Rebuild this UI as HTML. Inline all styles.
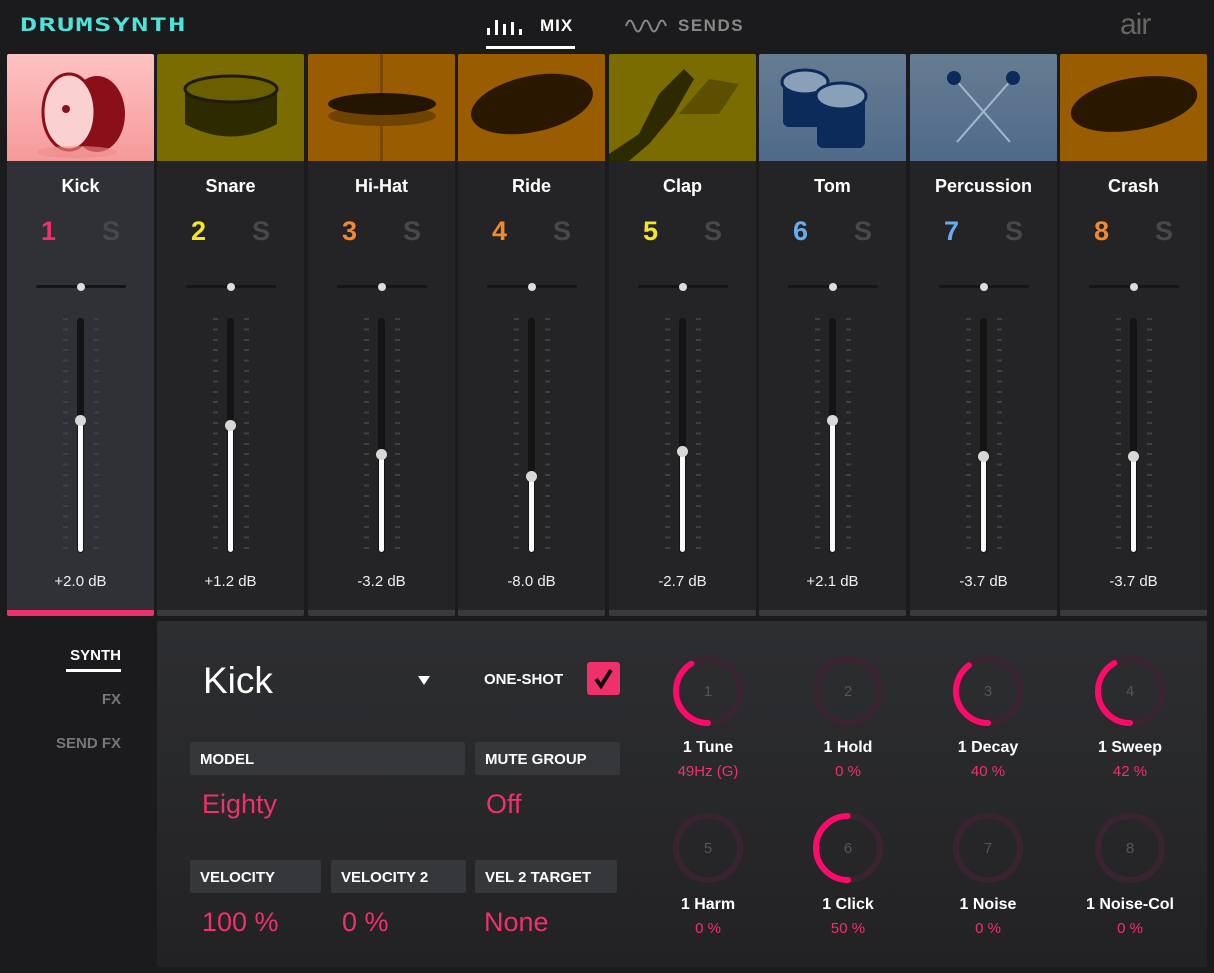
<!DOCTYPE html>
<html><head><meta charset="utf-8"><style>
*{margin:0;padding:0;box-sizing:border-box}
body{width:1214px;height:973px;background:#1b1b1d;font-family:"Liberation Sans",sans-serif;position:relative;overflow:hidden;color:#fff}
.a{position:absolute}
.col{position:absolute;top:54px;width:147px;height:562px}
.img{position:absolute;left:0;top:0;width:147px;height:107px;overflow:hidden;border-radius:2px 2px 0 0}
.strip{position:absolute;left:0;top:107px;width:147px;height:449px;background:#242426}
.bar{position:absolute;left:0;top:556px;width:147px;height:6px;background:#3a3a3e;border-radius:0 0 2px 2px}
.nm{position:absolute;top:122px;width:147px;text-align:center;font-weight:bold;font-size:18px}
.num{position:absolute;top:162px;left:34px;font-size:27px;font-weight:bold}
.s{position:absolute;top:162px;left:95px;font-size:27px;font-weight:bold;color:#48484c}
.pan{position:absolute;top:231px;left:29px;width:90px;height:3px;background:#151516;border-radius:2px}
.pan i{position:absolute;left:41px;top:-2.5px;width:8px;height:8px;border-radius:50%;background:#ddd}
.tk{position:absolute;top:264px;width:5px;height:234px;background:repeating-linear-gradient(to bottom,#404044 0 2px,transparent 2px 10.4px)}
.trk{position:absolute;top:264px;left:70px;width:7px;height:235px;background:#141415;border-radius:4px}
.fill{position:absolute;left:71px;width:5px;background:#fafafa;border-radius:3px;bottom:64px}
.th{position:absolute;left:68px;width:11px;height:11px;border-radius:50%;background:#d8d8d8}
.db{position:absolute;top:519px;width:147px;text-align:center;font-size:15px;color:#eee}
.hdr{position:absolute;background:#36373b;height:33px;font-weight:bold;font-size:15px;padding:9px 0 0 10px;border-radius:2px}
.val{position:absolute;color:#f0306a;font-size:27px}
.kn{position:absolute;width:140px;text-align:center}
.kn svg{display:block;margin:0 auto}
.kl{font-weight:bold;font-size:16px;margin-top:12px}
.kv{color:#f0306a;font-size:15px;margin-top:6px}
</style></head><body>
<!-- header -->
<div class="a" style="left:20px;top:13px;font-size:22px;font-weight:bold;color:#4de3da;letter-spacing:1px;font-family:'DejaVu Sans Mono','Liberation Mono',monospace;transform:scale(1.3,0.85);transform-origin:left center">DRUMSYNTH</div>
<svg class="a" style="left:486px;top:16px" width="38" height="20"><g fill="#fff"><rect x="1" y="12" width="3" height="7"/><rect x="9" y="4" width="3" height="15"/><rect x="17" y="8" width="3" height="11"/><rect x="25" y="6" width="3" height="13"/><rect x="33" y="13" width="3" height="6"/></g></svg>
<div class="a" style="left:540px;top:16px;font-weight:bold;font-size:17px;letter-spacing:1px">MIX</div>
<div class="a" style="left:486px;top:46px;width:89px;height:3px;background:#fff"></div>
<svg class="a" style="left:625px;top:17px" width="44" height="18"><path d="M1 9 Q5 -2 9 9 T17 9 T25 9 T33 9 T41 9" stroke="#888" stroke-width="2" fill="none"/></svg>
<div class="a" style="left:678px;top:16px;font-weight:bold;font-size:17px;letter-spacing:1.5px;color:#888">SENDS</div>
<div class="a" style="left:1120px;top:8px;font-size:30px;color:#666;letter-spacing:-1px">air</div>

<!-- channels -->
<div class="col" style="left:7px">
 <div class="img" style="background:linear-gradient(#ffc2c2,#f59a9a)"><svg width="147" height="107"><ellipse cx="90" cy="60" rx="28" ry="38" fill="#8a0f18"/><ellipse cx="62" cy="58" rx="26" ry="38" fill="#fbd0d0" stroke="#8a0f18" stroke-width="3"/><circle cx="59" cy="55" r="4" fill="#8a0f18"/><ellipse cx="70" cy="98" rx="40" ry="6" fill="#f08a8a" opacity=".6"/></svg></div>
 <div class="strip" style="background:#303136"></div><div class="bar" style="background:#f0306a"></div>
 <div class="nm">Kick</div><div class="num" style="color:#f0306a">1</div><div class="s">S</div>
 <div class="pan"><i></i></div><div class="tk" style="left:56px"></div><div class="tk" style="left:87px"></div><div class="trk"></div>
 <div class="fill" style="top:366px"></div><div class="th" style="top:361px"></div><div class="db">+2.0 dB</div>
</div>
<div class="col" style="left:157px">
 <div class="img" style="background:#7a6c00"><svg width="147" height="107"><path d="M28 35 L28 70 Q74 95 120 70 L120 35 Z" fill="#2e2a00"/><ellipse cx="74" cy="35" rx="46" ry="13" fill="#6a5e00" stroke="#1e1c00" stroke-width="3"/></svg></div>
 <div class="strip"></div><div class="bar"></div>
 <div class="nm">Snare</div><div class="num" style="color:#f5e52a">2</div><div class="s">S</div>
 <div class="pan"><i></i></div><div class="tk" style="left:56px"></div><div class="tk" style="left:87px"></div><div class="trk"></div>
 <div class="fill" style="top:371px"></div><div class="th" style="top:366px"></div><div class="db">+1.2 dB</div>
</div>
<div class="col" style="left:308px">
 <div class="img" style="background:#9a5c00"><svg width="147" height="107"><rect x="72" y="0" width="3" height="107" fill="#7a4800"/><ellipse cx="74" cy="62" rx="54" ry="10" fill="#6e4200"/><ellipse cx="74" cy="50" rx="54" ry="11" fill="#231500"/></svg></div>
 <div class="strip"></div><div class="bar"></div>
 <div class="nm">Hi-Hat</div><div class="num" style="color:#f5882a">3</div><div class="s">S</div>
 <div class="pan"><i></i></div><div class="tk" style="left:56px"></div><div class="tk" style="left:87px"></div><div class="trk"></div>
 <div class="fill" style="top:400px"></div><div class="th" style="top:395px"></div><div class="db">-3.2 dB</div>
</div>
<div class="col" style="left:458px">
 <div class="img" style="background:#9a5c00"><svg width="147" height="107"><ellipse cx="74" cy="50" rx="62" ry="28" fill="#2a1700" transform="rotate(-12 74 50)"/></svg></div>
 <div class="strip"></div><div class="bar"></div>
 <div class="nm">Ride</div><div class="num" style="color:#f5882a">4</div><div class="s">S</div>
 <div class="pan"><i></i></div><div class="tk" style="left:56px"></div><div class="tk" style="left:87px"></div><div class="trk"></div>
 <div class="fill" style="top:422px"></div><div class="th" style="top:417px"></div><div class="db">-8.0 dB</div>
</div>
<div class="col" style="left:609px">
 <div class="img" style="background:#7a6c00"><svg width="147" height="107"><path d="M0 100 L30 80 L50 40 L75 15 L85 25 L65 60 L40 90 L20 107 L0 107Z" fill="#2e2a00"/><path d="M70 60 L100 25 L130 30 L110 60 Z" fill="#5a5000"/></svg></div>
 <div class="strip"></div><div class="bar"></div>
 <div class="nm">Clap</div><div class="num" style="color:#f5e52a">5</div><div class="s">S</div>
 <div class="pan"><i></i></div><div class="tk" style="left:56px"></div><div class="tk" style="left:87px"></div><div class="trk"></div>
 <div class="fill" style="top:397px"></div><div class="th" style="top:392px"></div><div class="db">-2.7 dB</div>
</div>
<div class="col" style="left:759px">
 <div class="img" style="background:linear-gradient(#667c92,#4f6a8a)"><svg width="147" height="107"><rect x="24" y="28" width="44" height="45" rx="6" fill="#0c2a5a"/><ellipse cx="46" cy="28" rx="23" ry="12" fill="#8aa0b8" stroke="#0c2a5a" stroke-width="3"/><rect x="58" y="42" width="48" height="52" rx="6" fill="#0c2a5a"/><ellipse cx="82" cy="42" rx="25" ry="13" fill="#8aa0b8" stroke="#0c2a5a" stroke-width="3"/></svg></div>
 <div class="strip"></div><div class="bar"></div>
 <div class="nm">Tom</div><div class="num" style="color:#6aaaf0">6</div><div class="s">S</div>
 <div class="pan"><i></i></div><div class="tk" style="left:56px"></div><div class="tk" style="left:87px"></div><div class="trk"></div>
 <div class="fill" style="top:366px"></div><div class="th" style="top:361px"></div><div class="db">+2.1 dB</div>
</div>
<div class="col" style="left:910px">
 <div class="img" style="background:linear-gradient(#667c92,#4f6a8a)"><svg width="147" height="107"><line x1="45" y1="25" x2="100" y2="88" stroke="#a0b8d0" stroke-width="2"/><line x1="102" y1="25" x2="47" y2="88" stroke="#a0b8d0" stroke-width="2"/><circle cx="44" cy="24" r="7" fill="#0c2a5a"/><circle cx="103" cy="24" r="7" fill="#0c2a5a"/></svg></div>
 <div class="strip"></div><div class="bar"></div>
 <div class="nm">Percussion</div><div class="num" style="color:#6aaaf0">7</div><div class="s">S</div>
 <div class="pan"><i></i></div><div class="tk" style="left:56px"></div><div class="tk" style="left:87px"></div><div class="trk"></div>
 <div class="fill" style="top:402px"></div><div class="th" style="top:397px"></div><div class="db">-3.7 dB</div>
</div>
<div class="col" style="left:1060px">
 <div class="img" style="background:#9a5c00"><svg width="147" height="107"><ellipse cx="74" cy="50" rx="64" ry="26" fill="#2a1700" transform="rotate(-10 74 50)"/></svg></div>
 <div class="strip"></div><div class="bar"></div>
 <div class="nm">Crash</div><div class="num" style="color:#f5882a">8</div><div class="s">S</div>
 <div class="pan"><i></i></div><div class="tk" style="left:56px"></div><div class="tk" style="left:87px"></div><div class="trk"></div>
 <div class="fill" style="top:402px"></div><div class="th" style="top:397px"></div><div class="db">-3.7 dB</div>
</div>

<!-- sidebar -->
<div class="a" style="left:40px;top:647px;width:81px;text-align:right;font-weight:bold;font-size:15px">SYNTH</div>
<div class="a" style="left:66px;top:669px;width:55px;height:3px;background:#fff"></div>
<div class="a" style="left:40px;top:691px;width:81px;text-align:right;font-weight:bold;font-size:15px;color:#777">FX</div>
<div class="a" style="left:20px;top:735px;width:101px;text-align:right;font-weight:bold;font-size:15px;color:#777">SEND FX</div>

<!-- bottom panel -->
<div class="a" style="left:157px;top:621px;width:1050px;height:346px;background:linear-gradient(#2d2e31,#222224);border-radius:2px"></div>
<div class="a" style="left:203px;top:660px;font-size:37px">Kick</div>
<div class="a" style="left:418px;top:676px;width:0;height:0;border-left:6px solid transparent;border-right:6px solid transparent;border-top:9px solid #fff"></div>
<div class="a" style="left:484px;top:671px;font-weight:bold;font-size:15px">ONE-SHOT</div>
<div class="a" style="left:587px;top:662px;width:33px;height:33px;background:#f0306a;border-radius:3px"><svg width="33" height="33"><path d="M9 17 L14 24 L24 8" stroke="#111" stroke-width="4" fill="none"/></svg></div>
<div class="hdr" style="left:190px;top:742px;width:275px">MODEL</div>
<div class="hdr" style="left:475px;top:742px;width:145px">MUTE GROUP</div>
<div class="val" style="left:202px;top:789px">Eighty</div>
<div class="val" style="left:486px;top:789px">Off</div>
<div class="hdr" style="left:190px;top:860px;width:131px">VELOCITY</div>
<div class="hdr" style="left:331px;top:860px;width:135px">VELOCITY 2</div>
<div class="hdr" style="left:475px;top:860px;width:142px">VEL 2 TARGET</div>
<div class="val" style="left:202px;top:907px">100 %</div>
<div class="val" style="left:342px;top:907px">0 %</div>
<div class="val" style="left:484px;top:907px">None</div>

<!-- knobs -->
<div class="kn" style="left:638px;top:655px"><svg width="72" height="72"><circle cx="36" cy="36" r="32" stroke="#3b2431" stroke-width="6" fill="none"/><circle cx="36" cy="36" r="32" stroke="#ff0a6a" stroke-width="6" fill="none" stroke-dasharray="83 300" stroke-linecap="round" transform="rotate(90 36 36)"/><text x="36" y="41" text-anchor="middle" fill="#555" font-size="15" font-family="Liberation Sans">1</text></svg><div class="kl">1 Tune</div><div class="kv">49Hz (G)</div></div>
<div class="kn" style="left:778px;top:655px"><svg width="72" height="72"><circle cx="36" cy="36" r="32" stroke="#3b2431" stroke-width="6" fill="none"/><text x="36" y="41" text-anchor="middle" fill="#555" font-size="15" font-family="Liberation Sans">2</text></svg><div class="kl">1 Hold</div><div class="kv">0 %</div></div>
<div class="kn" style="left:918px;top:655px"><svg width="72" height="72"><circle cx="36" cy="36" r="32" stroke="#3b2431" stroke-width="6" fill="none"/><circle cx="36" cy="36" r="32" stroke="#ff0a6a" stroke-width="6" fill="none" stroke-dasharray="80 300" stroke-linecap="round" transform="rotate(90 36 36)"/><text x="36" y="41" text-anchor="middle" fill="#555" font-size="15" font-family="Liberation Sans">3</text></svg><div class="kl">1 Decay</div><div class="kv">40 %</div></div>
<div class="kn" style="left:1060px;top:655px"><svg width="72" height="72"><circle cx="36" cy="36" r="32" stroke="#3b2431" stroke-width="6" fill="none"/><circle cx="36" cy="36" r="32" stroke="#ff0a6a" stroke-width="6" fill="none" stroke-dasharray="84 300" stroke-linecap="round" transform="rotate(90 36 36)"/><text x="36" y="41" text-anchor="middle" fill="#555" font-size="15" font-family="Liberation Sans">4</text></svg><div class="kl">1 Sweep</div><div class="kv">42 %</div></div>
<div class="kn" style="left:638px;top:812px"><svg width="72" height="72"><circle cx="36" cy="36" r="32" stroke="#3b2431" stroke-width="6" fill="none"/><text x="36" y="41" text-anchor="middle" fill="#555" font-size="15" font-family="Liberation Sans">5</text></svg><div class="kl">1 Harm</div><div class="kv">0 %</div></div>
<div class="kn" style="left:778px;top:812px"><svg width="72" height="72"><circle cx="36" cy="36" r="32" stroke="#3b2431" stroke-width="6" fill="none"/><circle cx="36" cy="36" r="32" stroke="#ff0a6a" stroke-width="6" fill="none" stroke-dasharray="100 300" stroke-linecap="round" transform="rotate(90 36 36)"/><text x="36" y="41" text-anchor="middle" fill="#555" font-size="15" font-family="Liberation Sans">6</text></svg><div class="kl">1 Click</div><div class="kv">50 %</div></div>
<div class="kn" style="left:918px;top:812px"><svg width="72" height="72"><circle cx="36" cy="36" r="32" stroke="#3b2431" stroke-width="6" fill="none"/><text x="36" y="41" text-anchor="middle" fill="#555" font-size="15" font-family="Liberation Sans">7</text></svg><div class="kl">1 Noise</div><div class="kv">0 %</div></div>
<div class="kn" style="left:1060px;top:812px"><svg width="72" height="72"><circle cx="36" cy="36" r="32" stroke="#3b2431" stroke-width="6" fill="none"/><text x="36" y="41" text-anchor="middle" fill="#555" font-size="15" font-family="Liberation Sans">8</text></svg><div class="kl">1 Noise-Col</div><div class="kv">0 %</div></div>
</body></html>
